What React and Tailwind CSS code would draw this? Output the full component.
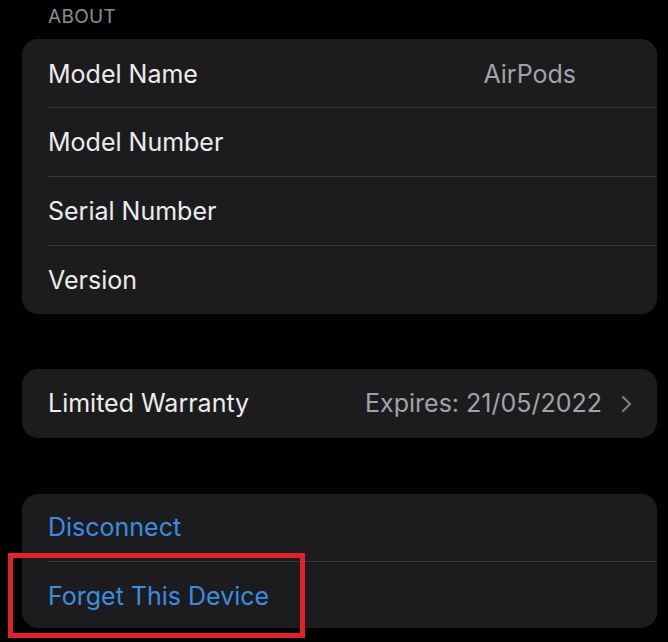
export default function App() {
  const font = { fontFamily: 'Inter, "Liberation Sans", sans-serif' };
  const Sep = () => <div className="ml-[26px] h-px bg-[#38383a]" />;
  return (
    <div className="relative w-[668px] h-[642px] overflow-hidden bg-black text-[#ececec]" style={font}>
      <div className="h-[39px] pl-[48px] flex items-center">
        <span className="text-[19px] leading-none tracking-[0.3px] text-[#8d8d92] -mt-[7px]">ABOUT</span>
      </div>
      <div className="ml-[22px] w-[635px] rounded-[16px] bg-[#1c1c1e]">
        <div className="h-[68px] pt-[3px] flex items-center justify-between pl-[26px] pr-[81px]">
          <span className="text-[25px]">Model Name</span>
          <span className="text-[25px] text-[#a2a2a7]">AirPods</span>
        </div>
        <Sep />
        <div className="h-[68px] pt-[2px] flex items-center pl-[26px]">
          <span className="text-[25px]">Model Number</span>
        </div>
        <Sep />
        <div className="h-[68px] pt-[2px] flex items-center pl-[26px]">
          <span className="text-[25px]">Serial Number</span>
        </div>
        <Sep />
        <div className="h-[68px] pt-[2px] flex items-center pl-[26px]">
          <span className="text-[25px]">Version</span>
        </div>
      </div>
      <div className="mt-[55px] ml-[22px] w-[635px] h-[69px] rounded-[16px] bg-[#1c1c1e] flex items-center pl-[26px] pr-[25px]">
        <span className="text-[25px] flex-1">Limited Warranty</span>
        <span className="text-[25px] text-[#a2a2a7] mr-[19px]">Expires: 21/05/2022</span>
        <svg width="11" height="18" viewBox="0 0 11 18" fill="none">
          <path d="M2 2 L9 9 L2 16" stroke="#7c7c81" strokeWidth="2.2" strokeLinecap="round" strokeLinejoin="round" />
        </svg>
      </div>
      <div className="mt-[56px] ml-[22px] w-[635px] rounded-[16px] bg-[#1c1c1e]">
        <div className="h-[67px] flex items-center pl-[26px]">
          <span className="text-[25px] text-[#3b8de0]">Disconnect</span>
        </div>
        <Sep />
        <div className="h-[66px] pt-[3px] flex items-center pl-[26px]">
          <span className="text-[25px] text-[#3b8de0]">Forget This Device</span>
        </div>
      </div>
      <div className="absolute left-[8px] top-[553px] w-[297px] h-[85px] border-[5px] border-[#e0222b]" />
    </div>
  );
}
